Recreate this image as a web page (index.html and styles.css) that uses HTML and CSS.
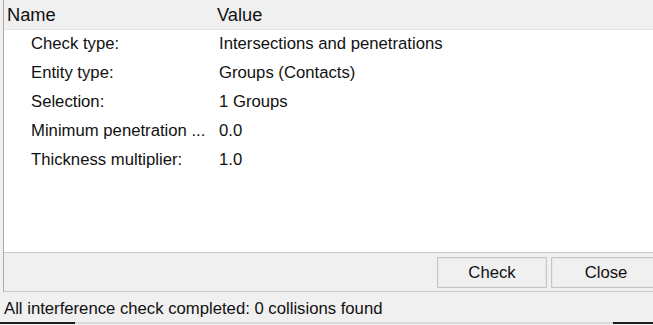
FILE: index.html
```html
<!DOCTYPE html>
<html lang="en">
<head>
    <meta charset="UTF-8">
    <title>Interference check</title>
    <link rel="stylesheet" href="styles.css">
</head>
<body>
    <div class="panel">
        <div class="grid">
            <div class="grid-head">
                <span class="head-name">Name</span>
                <span class="head-value">Value</span>
            </div>
            <div class="row">
                <span class="cell-name">Check type:</span>
                <span class="cell-value">Intersections and penetrations</span>
            </div>
            <div class="row">
                <span class="cell-name">Entity type:</span>
                <span class="cell-value">Groups (Contacts)</span>
            </div>
            <div class="row">
                <span class="cell-name">Selection:</span>
                <span class="cell-value">1 Groups</span>
            </div>
            <div class="row">
                <span class="cell-name">Minimum penetration ...</span>
                <span class="cell-value">0.0</span>
            </div>
            <div class="row">
                <span class="cell-name">Thickness multiplier:</span>
                <span class="cell-value">1.0</span>
            </div>
        </div>
        <div class="actions">
            <button class="btn">Check</button>
            <button class="btn">Close</button>
        </div>
    </div>
    <div class="status">All interference check completed: 0 collisions found</div>
    <div class="edge">
        <span class="edge-dark edge-left"></span>
        <span class="edge-gap"></span>
        <span class="edge-dark edge-right"></span>
    </div>
</body>
</html>
```

FILE: styles.css
```css
html, body{
    margin: 0;
    padding: 0;
    overflow: hidden;
}
body{
    width: 653px;
    height: 325px;
    background: #f0f0f0;
    font-family: "Liberation Sans", Arial, sans-serif;
    font-size: 16.7px;
    color: #111;
}
.panel{
    margin-left: 3px;
    border-left: 1px solid #a9a9a9;
    border-bottom: 1px solid #c9c9c9;
}
.grid{
    height: 253px;
    background: #fff;
    border-bottom: 1px solid #c6c9cc;
    box-sizing: border-box;
}
.grid-head{
    display: grid;
    grid-template-columns: 213px 1fr;
    align-items: center;
    height: 28px;
    background: #f0f0f0;
    border-bottom: 1px solid #e3e3e3;
    font-size: 18.3px;
    padding-top: 1px;
    box-sizing: content-box;
}
.head-name{
    padding-left: 3px;
}
.row{
    display: grid;
    grid-template-columns: 213px 1fr;
    align-items: center;
    height: 29px;
    padding-bottom: 2px;
    box-sizing: border-box;
}
.cell-name{
    padding-left: 27px;
}
.cell-value{
    padding-left: 2px;
}
.actions{
    display: flex;
    justify-content: flex-end;
    gap: 4px;
    height: 38px;
    padding-top: 4px;
    box-sizing: border-box;
    margin-right: -8px;
}
.btn{
    width: 110px;
    height: 31px;
    background: #f0f0f0;
    border: 1px solid #c2c7cc;
    box-shadow: inset 0 0 0 1px #e4e6e8;
    font-family: inherit;
    font-size: 16.7px;
    color: #111;
    padding: 0;
}
.status{
    height: 30px;
    line-height: 34px;
    padding-left: 4px;
}
.edge{
    display: flex;
    height: 2px;
}
.edge-dark{
    background: #1e1e1e;
}
.edge-left{
    width: 75px;
}
.edge-gap{
    flex: 1;
    background: #d8d8d8;
}
.edge-right{
    width: 40px;
}
```
